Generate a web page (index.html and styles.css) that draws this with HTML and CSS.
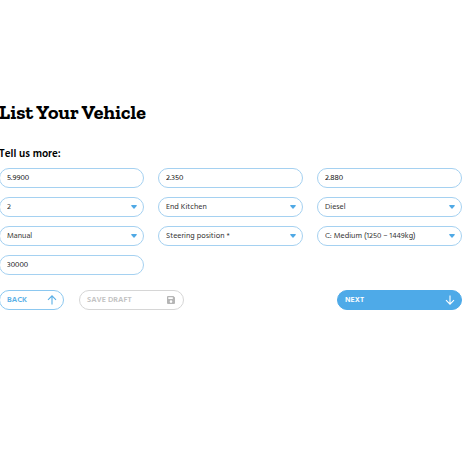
FILE: index.html
```html
<!DOCTYPE html>
<html lang="en">
<head>
<meta charset="utf-8">
<meta name="viewport" content="width=device-width, initial-scale=1">
<title>List Your Vehicle</title>
<link rel="stylesheet" href="styles.css">
</head>
<body>
<main class="page">
  <h1 class="title">List Your Vehicle</h1>
  <form class="form">
    <h2 class="subtitle">Tell us more:</h2>
    <div class="fields">
      <input class="control" type="text" aria-label="Length" value="5.9900">
      <input class="control" type="text" aria-label="Width" value="2.350">
      <input class="control" type="text" aria-label="Height" value="2.880">
      <select class="control select" aria-label="Berths"><option>2</option></select>
      <select class="control select" aria-label="Layout"><option>End Kitchen</option></select>
      <select class="control select" aria-label="Fuel"><option>Diesel</option></select>
      <select class="control select" aria-label="Transmission"><option>Manual</option></select>
      <select class="control select" aria-label="Steering position"><option>Steering position *</option></select>
      <select class="control select" aria-label="Weight class"><option>C: Medium (1250 – 1449kg)</option></select>
      <input class="control" type="text" aria-label="Mileage" value="30000">
    </div>
    <div class="actions">
      <button class="button back" type="button">BACK
        <svg class="arrow" viewBox="0 0 10 10" aria-hidden="true"><path d="M5 9.6V.8M1 4.8l4-4 4 4"/></svg>
      </button>
      <button class="button draft" type="button">SAVE DRAFT
        <svg class="disk" viewBox="0 0 8 8" aria-hidden="true"><path fill-rule="evenodd" d="M1 0h5.4L8 1.6V7a1 1 0 0 1-1 1H1a1 1 0 0 1-1-1V1a1 1 0 0 1 1-1zM1.3 1.2v1.9h4.5V1.2zM4 4.3a1.3 1.3 0 1 0 0 2.6 1.3 1.3 0 0 0 0-2.6z"/></svg>
      </button>
      <button class="button next" type="submit">NEXT
        <svg class="arrow" viewBox="0 0 10 10" aria-hidden="true"><path d="M5 .4v8.8M1 5.2l4 4 4-4"/></svg>
      </button>
    </div>
  </form>
</main>
</body>
</html>
```
FILE: styles.css
```css
* {
  box-sizing: border-box;
}

body {
  margin: 0;
  background: #fff;
  color: #000;
  font-family: Hind, "Noto Sans", sans-serif;
}

.page {
  margin: 0 8px 0 -1px;
  padding-top: 100px;
}

.title {
  margin: 0 0 23px;
  font: 700 20px/24px "Roboto Slab", "Zilla Slab", "DejaVu Serif", serif;
  white-space: nowrap;
}

.subtitle {
  margin: 0 0 7px;
  font-size: 11px;
  line-height: 14px;
  font-weight: 600;
}

.fields {
  display: grid;
  grid-template-columns: repeat(3, minmax(0, 1fr));
  gap: 9px 14px;
}

.control {
  width: 100%;
  height: 20px;
  margin: 0;
  padding: 0 7px;
  border: 1px solid #a5d1f1;
  border-radius: 10px;
  background: #fff;
  color: #111;
  font-family: inherit;
  font-size: 8px;
}

.select {
  appearance: none;
  padding-right: 18px;
  color: #333;
  background: #fff url("data:image/svg+xml,%3Csvg xmlns='http://www.w3.org/2000/svg' viewBox='0 0 6 4'%3E%3Cpath d='M.3 0h5.4v1L3 4 .3 1z' fill='%2350a9e5'/%3E%3C/svg%3E") no-repeat right 6px center / 6px 4px;
}

.actions {
  display: flex;
  gap: 15px;
  margin-top: 15px;
}

.button {
  display: flex;
  align-items: center;
  justify-content: space-between;
  height: 20px;
  padding: 0 6px 0 7px;
  border: 1px solid #8cc8f0;
  border-radius: 10px;
  background: #fff;
  color: #5aafe6;
  font-family: inherit;
  font-size: 8px;
  font-weight: 600;
}

.back {
  flex: 0 0 65px;
}

.draft {
  flex: 0 0 105px;
  border-color: #d6d6d6;
  color: #c2c2c2;
}

.next {
  flex: 0 0 125px;
  margin-left: auto;
  border-color: #4eaae8;
  background: #4eaae8;
  color: #fff;
}

.arrow {
  width: 10px;
  height: 10px;
  fill: none;
  stroke: currentColor;
  stroke-width: 1.1;
}

.disk {
  width: 8px;
  height: 8px;
  margin-right: 2px;
  fill: #b5b5b5;
}
```
